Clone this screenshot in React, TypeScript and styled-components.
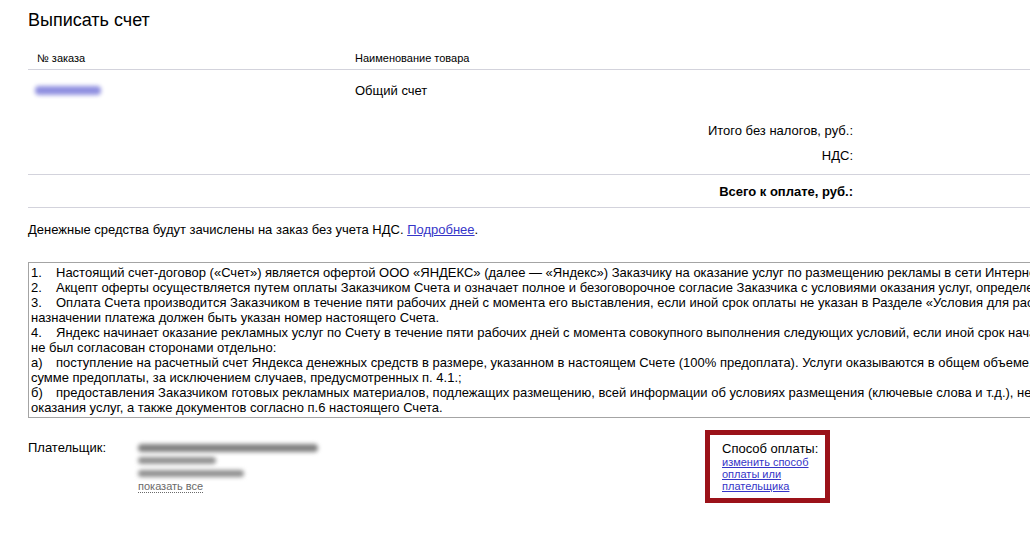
import React from 'react'
import styled, { createGlobalStyle } from 'styled-components'

const GlobalStyle = createGlobalStyle`
  html, body {
    margin: 0;
    padding: 0;
    background: #fff;
    overflow: hidden;
  }
  body {
    font-family: 'Liberation Sans', Arial, sans-serif;
    font-size: 13px;
    color: #000;
  }
`

const Page = styled.div`
  width: 1002px;
  padding-left: 28px;
  overflow: hidden;
`

const Title = styled.h1`
  margin: 0;
  padding-top: 10px;
  font-size: 18px;
  line-height: 21px;
  font-weight: normal;
`

const Table = styled.div`
  display: flex;
  flex-direction: column;
`

const Row = styled.div<{ head?: boolean }>`
  display: grid;
  grid-template-columns: 327px 1fr;
  align-items: center;
  height: ${({ head }) => (head ? '21px' : '40px')};
  padding-top: ${({ head }) => (head ? '17px' : '0')};
  font-size: ${({ head }) => (head ? '11px' : '13px')};
  line-height: ${({ head }) => (head ? '21px' : '15px')};
  border-bottom: ${({ head }) => (head ? '1px solid #d3d3dc' : 'none')};
`

const Cell = styled.div<{ indent?: number }>`
  padding-left: ${({ indent }) => indent ?? 0}px;
`

const Smudge = styled.div<{ w: number; h?: number; tone: string }>`
  width: ${({ w }) => w}px;
  height: ${({ h }) => h ?? 7}px;
  border-radius: 4px;
  background: ${({ tone }) => tone};
  filter: blur(2px);
`

const Totals = styled.div`
  display: flex;
  flex-direction: column;
  padding: 8px 0 6px;
  border-bottom: 1px solid #d3d3dc;
`

const TotalRow = styled.div<{ grand?: boolean }>`
  display: grid;
  grid-template-columns: 825px 1fr;
  align-items: center;
  height: ${({ grand }) => (grand ? '32px' : '25px')};
  font-weight: ${({ grand }) => (grand ? 'bold' : 'normal')};
  border-bottom: ${({ grand }) => (grand ? '1px solid #d3d3dc' : 'none')};
`

const TotalLabel = styled.div`
  text-align: right;
`

const Note = styled.p`
  margin: 14px 0 0;
  line-height: 15px;
`

const Link = styled.a`
  color: #3535c8;
  text-decoration: underline;
  cursor: pointer;
`

const Terms = styled.div`
  margin-top: 25px;
  width: 1180px;
  border: 1px solid #a4a4a4;
  padding: 2px;
  line-height: 15px;
`

const TermLine = styled.div`
  white-space: nowrap;
`

const Num = styled.span`
  display: inline-block;
  width: 25px;
`

const Bottom = styled.div`
  display: flex;
  align-items: flex-start;
  margin-top: 12px;
`

const Payer = styled.div`
  display: grid;
  grid-template-columns: 110px 567px;
  padding-top: 10px;
`

const PayerLabel = styled.div`
  line-height: 15px;
`

const PayerData = styled.div`
  display: flex;
  flex-direction: column;
  padding-top: 1px;
`

const DataLine = styled.div`
  height: 13px;
  display: flex;
  align-items: center;
`

const ShowAll = styled.span`
  align-self: flex-start;
  font-size: 11px;
  line-height: 12px;
  color: #6a6a6a;
  border-bottom: 1px dotted #6a6a6a;
  cursor: pointer;
`

const PayBox = styled.div`
  width: 93px;
  border: 5px solid #9b1219;
  padding: 6px 10px 6px 12px;
`

const PayTitle = styled.div`
  line-height: 15px;
  white-space: nowrap;
`

const PayLink = styled(Link)`
  display: block;
  font-size: 11px;
  line-height: 12px;
`

const TERMS: [string, string][] = [
  ['1.', 'Настоящий счет-договор («Счет») является офертой ООО «ЯНДЕКС» (далее — «Яндекс») Заказчику на оказание услуг по размещению рекламы в сети Интернет.'],
  ['2.', 'Акцепт оферты осуществляется путем оплаты Заказчиком Счета и означает полное и безоговорочное согласие Заказчика с условиями оказания услуг, определенными в настоящем Счете.'],
  ['3.', 'Оплата Счета производится Заказчиком в течение пяти рабочих дней с момента его выставления, если иной срок оплаты не указан в Разделе «Условия для расчетов». В'],
  ['', 'назначении платежа должен быть указан номер настоящего Счета.'],
  ['4.', 'Яндекс начинает оказание рекламных услуг по Счету в течение пяти рабочих дней с момента совокупного выполнения следующих условий, если иной срок начала'],
  ['', 'не был согласован сторонами отдельно:'],
  ['а)', 'поступление на расчетный счет Яндекса денежных средств в размере, указанном в настоящем Счете (100% предоплата). Услуги оказываются в общем объеме,'],
  ['', 'сумме предоплаты, за исключением случаев, предусмотренных п. 4.1.;'],
  ['б)', 'предоставления Заказчиком готовых рекламных материалов, подлежащих размещению, всей информации об условиях размещения (ключевые слова и т.д.), необходимой для'],
  ['', 'оказания услуг, а также документов согласно п.6 настоящего Счета.']
]

export default function App() {
  return (
    <>
      <GlobalStyle />
      <Page>
        <Title>Выписать счет</Title>

        <Table>
          <Row head>
            <Cell indent={9}>№ заказа</Cell>
            <Cell>Наименование товара</Cell>
          </Row>
          <Row>
            <Cell indent={7}>
              <Smudge w={66} h={9} tone="#9090e0" />
            </Cell>
            <Cell>Общий счет</Cell>
          </Row>
        </Table>

        <Totals>
          <TotalRow>
            <TotalLabel>Итого без налогов, руб.:</TotalLabel>
          </TotalRow>
          <TotalRow>
            <TotalLabel>НДС:</TotalLabel>
          </TotalRow>
        </Totals>
        <TotalRow grand>
          <TotalLabel>Всего к оплате, руб.:</TotalLabel>
        </TotalRow>

        <Note>
          Денежные средства будут зачислены на заказ без учета НДС. <Link>Подробнее</Link>.
        </Note>

        <Terms>
          {TERMS.map(([num, text], i) => (
            <TermLine key={i}>
              {num && <Num>{num}</Num>}
              {text}
            </TermLine>
          ))}
        </Terms>

        <Bottom>
          <Payer>
            <PayerLabel>Плательщик:</PayerLabel>
            <PayerData>
              <DataLine>
                <Smudge w={180} h={8} tone="#808080" />
              </DataLine>
              <DataLine>
                <Smudge w={78} tone="#909090" />
              </DataLine>
              <DataLine>
                <Smudge w={106} tone="#909090" />
              </DataLine>
              <ShowAll>показать все</ShowAll>
            </PayerData>
          </Payer>
          <PayBox>
            <PayTitle>Способ оплаты:</PayTitle>
            <PayLink>
              изменить способ
              <br />
              оплаты или
              <br />
              плательщика
            </PayLink>
          </PayBox>
        </Bottom>
      </Page>
    </>
  )
}
